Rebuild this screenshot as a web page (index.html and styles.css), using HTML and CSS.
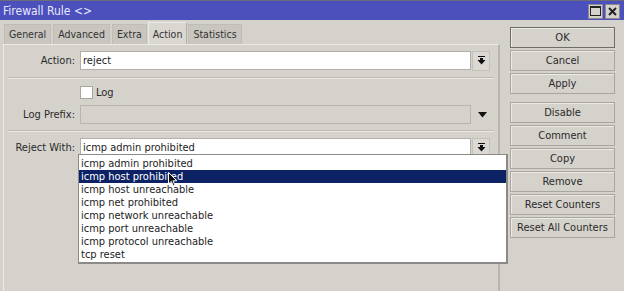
FILE: index.html
```html
<!DOCTYPE html>
<html>
<head>
<meta charset="utf-8">
<link rel="stylesheet" href="styles.css">
</head>
<body>
<div class="window">
  <div class="titlebar">
    <span class="title">Firewall Rule &lt;&gt;</span>
    <div class="title-buttons">
      <span class="tbtn"><svg width="11" height="10" viewBox="0 0 11 10"><rect x="0.5" y="0.5" width="10" height="9" fill="none" stroke="#222" stroke-width="1"/><rect x="0" y="0" width="11" height="2" fill="#222"/></svg></span>
      <span class="tbtn"><svg width="9" height="9" viewBox="0 0 9 9"><path d="M1 1 L8 8 M8 1 L1 8" stroke="#222" stroke-width="2"/></svg></span>
    </div>
  </div>
  <div class="body">
    <div class="main">
      <div class="tabs">
        <span class="tab">General</span>
        <span class="tab">Advanced</span>
        <span class="tab">Extra</span>
        <span class="tab active">Action</span>
        <span class="tab">Statistics</span>
      </div>
      <div class="panel">
        <div class="row">
          <span class="label">Action:</span>
          <div class="field">reject</div>
          <span class="ddbtn"><svg width="9" height="9" viewBox="0 0 9 9"><rect x="1" y="0" width="7" height="1" fill="#111"/><rect x="3" y="2" width="3" height="2" fill="#111"/><path d="M0.5 4 L8.5 4 L4.5 8.5 Z" fill="#111"/></svg></span>
        </div>
        <div class="sep"></div>
        <div class="row check-row">
          <span class="label"></span>
          <span class="checkbox"></span>
          <span class="check-text">Log</span>
        </div>
        <div class="row">
          <span class="label">Log Prefix:</span>
          <div class="field disabled"></div>
          <span class="ddplain"><svg width="9" height="6" viewBox="0 0 9 6"><path d="M0 0 L9 0 L4.5 5.5 Z" fill="#111"/></svg></span>
        </div>
        <div class="sep"></div>
        <div class="row">
          <span class="label">Reject With:</span>
          <div class="field">icmp admin prohibited</div>
          <span class="ddbtn"><svg width="9" height="9" viewBox="0 0 9 9"><rect x="1" y="0" width="7" height="1" fill="#111"/><rect x="3" y="2" width="3" height="2" fill="#111"/><path d="M0.5 4 L8.5 4 L4.5 8.5 Z" fill="#111"/></svg></span>
        </div>
        <ul class="dropdown">
          <li>icmp admin prohibited</li>
          <li class="selected">icmp host prohibited</li>
          <li>icmp host unreachable</li>
          <li>icmp net prohibited</li>
          <li>icmp network unreachable</li>
          <li>icmp port unreachable</li>
          <li>icmp protocol unreachable</li>
          <li>tcp reset</li>
        </ul>
        <svg class="cursor" width="10" height="16" viewBox="0 0 10 16"><path d="M0.5 0.5 L0.5 12 L3.3 9.4 L5.3 14 L7 13.2 L5 8.8 L8.8 8.8 Z" fill="#111" stroke="#fff" stroke-width="1"/></svg>
      </div>
    </div>
    <div class="buttons">
      <div class="group">
        <button class="btn default">OK</button>
        <button class="btn">Cancel</button>
        <button class="btn">Apply</button>
      </div>
      <div class="group">
        <button class="btn">Disable</button>
        <button class="btn">Comment</button>
        <button class="btn">Copy</button>
        <button class="btn">Remove</button>
        <button class="btn">Reset Counters</button>
        <button class="btn">Reset All Counters</button>
      </div>
    </div>
  </div>
</div>
</body>
</html>
```
FILE: styles.css
```css
html, body {
  margin: 0;
  padding: 0;
  background: #d5d2cc;
}
body {
  font-family: "DejaVu Sans Condensed", "Liberation Sans", sans-serif;
  font-size: 11px;
  color: #2a2a2a;
}
.window {
  width: 624px;
  height: 291px;
  overflow: hidden;
  background: #d5d2cc;
  display: flex;
  flex-direction: column;
}
.titlebar {
  height: 19px;
  background: #4b50bc;
  border-top: 1px solid #6a6a78;
  display: flex;
  align-items: center;
  justify-content: space-between;
  padding: 0 4px 0 3px;
}
.title {
  color: #e8e8ff;
  font-size: 12px;
}
.title-buttons {
  display: flex;
  gap: 2px;
  margin-top: 1px;
}
.tbtn {
  width: 13px;
  height: 13px;
  background: #d5d2cc;
  border: 1px solid #8a8a90;
  display: flex;
  align-items: center;
  justify-content: center;
}
.body {
  flex: 1;
  display: flex;
  padding: 0 0 0 3px;
}
.main {
  width: 497px;
  display: flex;
  flex-direction: column;
  padding-top: 2px;
}
.tabs {
  display: flex;
  align-items: flex-end;
  gap: 2px;
  padding-left: 1px;
  height: 22px;
}
.tab {
  height: 19px;
  line-height: 19px;
  padding: 0 4px;
  font-size: 10.5px;
  background: #c9c6c0;
  border: 1px solid #c0bdb7;
  border-bottom: none;
  color: #333;
}
.tab.active {
  height: 21px;
  line-height: 22px;
  background: #dad7d1;
  border-color: #eceae6 #b4b1ab #dad7d1 #eceae6;
  margin: 0 -1px 0 -1px;
  position: relative;
  z-index: 1;
}
.panel {
  flex: 1;
  position: relative;
  border-left: 1px solid #eceae6;
  border-top: 1px solid #eceae6;
  border-right: 2px solid #b8b5af;
  padding: 6px 4px 0 4px;
}
.row {
  display: flex;
  align-items: center;
  height: 19px;
}
.label {
  width: 67px;
  text-align: right;
  padding-right: 5px;
  flex: none;
}
.field {
  width: 387px;
  height: 17px;
  line-height: 17px;
  background: #fff;
  border: 1px solid #b3b0aa;
  padding-left: 2px;
  color: #222;
}
.field.disabled {
  background: #d5d2cc;
  border-color: #b8b5af;
}
.ddbtn {
  width: 16px;
  height: 18px;
  margin-left: 1px;
  background: #dcd9d4;
  border: 1px solid #c4c1bb;
  display: flex;
  align-items: center;
  justify-content: center;
}
.ddplain {
  width: 16px;
  margin-left: 3px;
  display: flex;
  align-items: center;
  justify-content: center;
}
.sep {
  height: 0;
  border-top: 1px solid #bdbab4;
  border-bottom: 1px solid #eceae6;
  margin: 7px 0 7px 0;
}
.sep + .row + .row + .sep {
  margin: 6px 0 6px 0;
}
.check-row {
  height: 13px;
  margin: 0 0 6px;
}
.checkbox {
  width: 11px;
  height: 11px;
  background: #fff;
  border: 1px solid #a9a6a0;
}
.check-text {
  margin-left: 3px;
}
.dropdown {
  position: absolute;
  left: 74px;
  top: 109px;
  width: 427px;
  margin: 0;
  padding: 2px 0 1px;
  list-style: none;
  background: #fff;
  border: 1px solid #8c8a86;
  border-right-width: 2px;
  border-bottom-width: 2px;
  z-index: 3;
}
.dropdown li {
  height: 13px;
  line-height: 13px;
  padding-left: 2px;
  color: #222;
}
.dropdown li.selected {
  background: #0c2264;
  color: #fff;
}
.cursor {
  position: absolute;
  left: 164px;
  top: 127px;
  z-index: 4;
}
.buttons {
  margin-left: 10px;
  padding-top: 7px;
  display: flex;
  flex-direction: column;
  gap: 8px;
}
.group {
  display: flex;
  flex-direction: column;
  gap: 2px;
}
.btn {
  width: 105px;
  height: 21px;
  font: inherit;
  color: #2a2a2a;
  background: #d5d2cc;
  border: 1px solid #a9a6a0;
  box-shadow: inset 1px 1px 0 #eceae6;
  padding: 0;
}
.btn.default {
  border-color: #6f6d6a;
}
```
